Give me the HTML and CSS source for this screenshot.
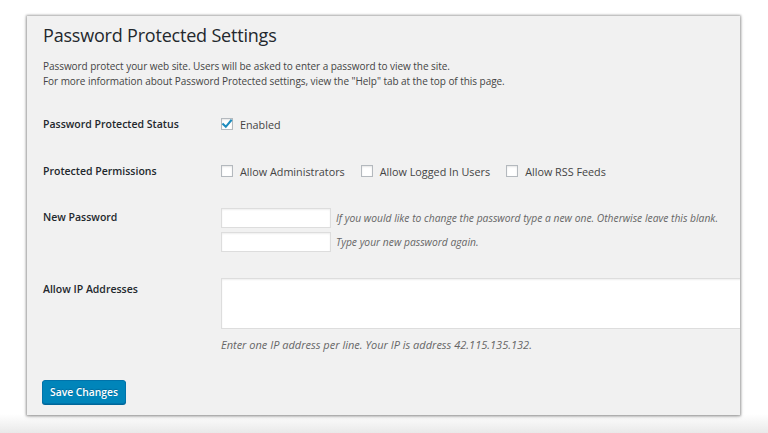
FILE: index.html
```html
<!DOCTYPE html>
<html lang="en">
<head>
<meta charset="utf-8">
<title>Password Protected Settings</title>
<link rel="stylesheet" href="styles.css">
</head>
<body>
<div class="stage">
  <div class="panel">
    <h1 class="title">Password Protected Settings</h1>
    <p class="intro">Password protect your web site. Users will be asked to enter a password to view the site.<br>For more information about Password Protected settings, view the "Help" tab at the top of this page.</p>

    <div class="row row-status">
      <div class="label">Password Protected Status</div>
      <div class="field">
        <label class="check">
          <span class="box checked"><svg viewBox="0 0 12 12" width="12" height="12"><path d="M2.2 6.2 L4.8 8.8 L10 2.6" fill="none" stroke="#1e8cbe" stroke-width="2.1" stroke-linecap="square"/></svg></span>
          <span class="ctext">Enabled</span>
        </label>
      </div>
    </div>

    <div class="row row-perm">
      <div class="label">Protected Permissions</div>
      <div class="field checks">
        <label class="check"><span class="box"></span><span class="ctext">Allow Administrators</span></label>
        <label class="check"><span class="box"></span><span class="ctext">Allow Logged In Users</span></label>
        <label class="check"><span class="box"></span><span class="ctext">Allow RSS Feeds</span></label>
      </div>
    </div>

    <div class="row row-pass">
      <div class="label">New Password</div>
      <div class="field stack">
        <div class="pline"><span class="input"></span><span class="desc">If you would like to change the password type a new one. Otherwise leave this blank.</span></div>
        <div class="pline"><span class="input"></span><span class="desc">Type your new password again.</span></div>
      </div>
    </div>

    <div class="row row-ip">
      <div class="label">Allow IP Addresses</div>
      <div class="field stack">
        <div class="textarea"></div>
        <div class="desc ipdesc">Enter one IP address per line. Your IP is address 42.115.135.132.</div>
      </div>
    </div>

    <div class="actions"><span class="button">Save Changes</span></div>
  </div>
</div>
</body>
</html>
```

FILE: styles.css
```css
html, body {
  margin: 0;
  padding: 0;
}
body {
  width: 768px;
  height: 433px;
  overflow: hidden;
  background: linear-gradient(to bottom, #ffffff 0, #ffffff 414px, #e9e9e9 433px);
  font-family: "Open Sans", "Noto Sans", sans-serif;
  color: #444;
}
.stage {
  padding: 16px 0 0 27px;
}
.panel {
  width: 713px;
  height: 399px;
  box-sizing: border-box;
  background: #f1f1f1;
  box-shadow: 0 0 2px 1px rgba(0,0,0,0.28), 0 1px 4px rgba(0,0,0,0.25);
  overflow: hidden;
  padding: 7px 0 0 16px;
}
.title {
  margin: 0;
  font-size: 18px;
  line-height: 24px;
  font-weight: 400;
  color: #23282d;
  letter-spacing: -0.2px;
}
.intro {
  margin: 12px 0 0;
  font-size: 10px;
  line-height: 15px;
  color: #444;
  letter-spacing: -0.05px;
}
.row {
  display: flex;
  align-items: flex-start;
}
.label {
  width: 178px;
  flex: none;
  font-size: 10.5px;
  line-height: 16px;
  font-weight: 600;
  color: #23282d;
}
.field {
  display: flex;
  align-items: center;
}
.row-status { margin-top: 27px; }
.row-perm { margin-top: 31px; }
.row-pass { margin-top: 29px; }
.row-pass .label { padding-top: 1px; }
.row-ip { margin-top: 22px; }
.row-ip .label { padding-top: 3px; }
.check {
  display: flex;
  align-items: center;
  height: 16px;
  margin-right: 16px;
}
.box {
  width: 12px;
  height: 12px;
  box-sizing: border-box;
  border: 1px solid #b4b9be;
  background: #fff;
  box-shadow: inset 0 1px 2px rgba(0,0,0,0.1);
  display: block;
  flex: none;
}
.box svg { display: block; margin: -1px 0 0 -1px; }
.ctext {
  margin-left: 7px;
  font-size: 10.8px;
  color: #444;
}
.stack {
  flex-direction: column;
  align-items: flex-start;
}
.pline {
  display: flex;
  align-items: center;
  height: 20px;
  margin-bottom: 4px;
}
.input {
  width: 110px;
  height: 20px;
  box-sizing: border-box;
  border: 1px solid #ddd;
  background: #fff;
  box-shadow: inset 0 1px 2px rgba(0,0,0,0.07);
  display: block;
}
.desc {
  font-style: italic;
  font-size: 10.3px;
  color: #666;
  margin-left: 5px;
}
.textarea {
  width: 540px;
  height: 51px;
  box-sizing: border-box;
  border: 1px solid #ddd;
  background: #fff;
  box-shadow: inset 0 1px 2px rgba(0,0,0,0.07);
}
.ipdesc {
  margin: 8px 0 0;
  line-height: 16px;
  font-size: 11px;
}
.actions {
  margin-top: 26px;
  margin-left: -1px;
}
.button {
  display: inline-block;
  height: 24px;
  line-height: 22px;
  box-sizing: border-box;
  padding: 0 7px;
  background: #0085ba;
  border: 1px solid #0073aa;
  border-radius: 3px;
  box-shadow: 0 1px 0 #006799;
  color: #fff;
  font-size: 10.3px;
  font-weight: 600;
  text-shadow: 0 -1px 1px #006799;
}
```
